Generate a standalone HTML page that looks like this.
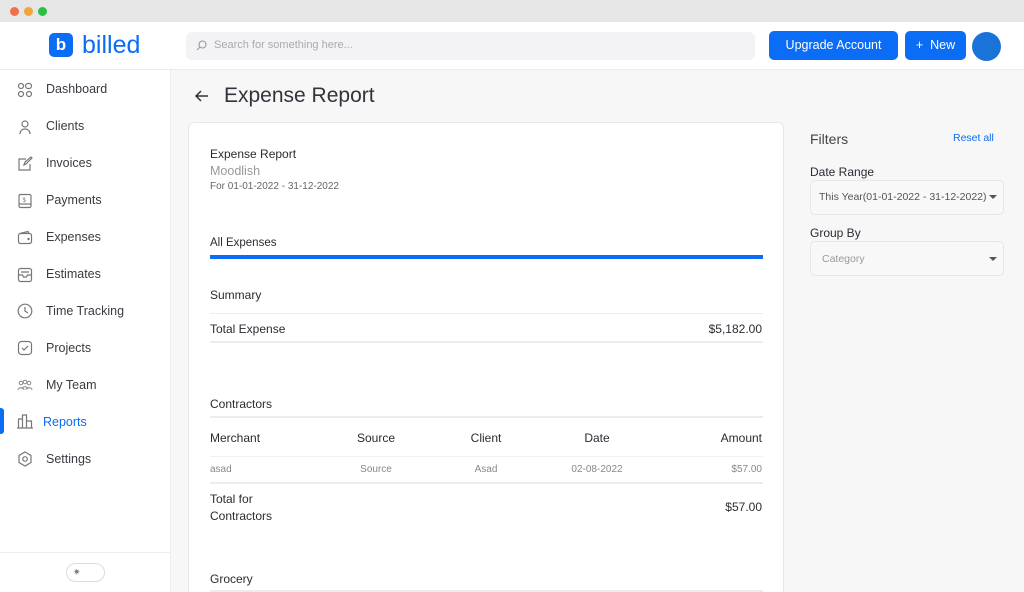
<!DOCTYPE html>
<html><head><meta charset="utf-8">
<style>
*{box-sizing:border-box;margin:0;padding:0}
html,body{width:1024px;height:592px;overflow:hidden}
body{font-family:"Liberation Sans",sans-serif;background:#f7f7f8;position:relative;color:#2b2b33}
.a{position:absolute}
.top{left:0;top:0;width:1024px;height:22px;background:#e6e6e6}
.dot{top:7px;width:9px;height:9px;border-radius:50%}
.hdr{left:0;top:22px;width:1024px;height:48px;background:#fff;border-bottom:1px solid #ececec}
.side{left:0;top:70px;width:171px;height:522px;background:#fff;border-right:1px solid #eee}
.nav{left:46px;font-size:12.5px;color:#3a3a42}
.ic{left:17px;width:16px;height:16px}
.card{left:188px;top:122px;width:596px;height:470px;background:#fff;border:1px solid #e8e8ec;border-bottom:none;border-radius:6px 6px 0 0}
.t13{font-size:12px;color:#2b2b33}
.line{left:210px;width:553px;height:2px;background:#ececec}
.btn{background:#0b6cf5;color:#fff;font-size:12.5px;border-radius:5px;text-align:center;line-height:29px;top:31px;height:29px}
.sel{left:810px;width:194px;height:35px;background:#f8f8f9;border:1px solid #e6e6e9;border-radius:5px;font-size:10.5px;color:#555}
.caret{right:6px;top:14px;width:0;height:0;border-left:4px solid transparent;border-right:4px solid transparent;border-top:4px solid #555}
</style></head><body>
<div class="a top"></div>
<div class="a dot" style="left:10px;background:#f26e4f"></div>
<div class="a dot" style="left:24px;background:#f5a23b"></div>
<div class="a dot" style="left:38px;background:#29c141"></div>
<div class="a hdr"></div>
<div class="a" style="left:49px;top:33px;width:24px;height:24px;background:#0b6cf5;border-radius:5px;color:#fff;font-weight:bold;font-size:17px;text-align:center;line-height:23px">b</div>
<div class="a" style="left:82px;top:31px;font-size:25px;color:#0b6cf5">billed</div>
<div class="a" style="left:186px;top:32px;width:569px;height:28px;background:#f3f3f5;border-radius:6px"></div>
<svg class="a" style="left:196px;top:40px" width="11" height="11" viewBox="0 0 11 11"><circle cx="6.5" cy="4.5" r="3.5" fill="none" stroke="#999" stroke-width="1.1"/><path d="M4 7L1 10" stroke="#999" stroke-width="1.1"/></svg>
<div class="a" style="left:214px;top:39px;font-size:11px;color:#aaa">Search for something here...</div>
<div class="a btn" style="left:769px;width:129px">Upgrade Account</div>
<div class="a btn" style="left:905px;width:61px">+&nbsp; New</div>
<div class="a" style="left:972px;top:32px;width:29px;height:29px;border-radius:50%;background:#1a73d9"></div>

<div class="a side"></div>
<svg class="a ic" style="top:82px" viewBox="0 0 16 16" fill="none" stroke="#777" stroke-width="1.2"><circle cx="4" cy="4" r="2.5"/><rect x="8.5" y="1.5" width="6" height="5" rx="2.5"/><circle cx="4" cy="12" r="2.5"/><circle cx="12" cy="12" r="2.5"/></svg>
<div class="a nav" style="top:82px">Dashboard</div>
<svg class="a ic" style="top:119px" viewBox="0 0 16 16" fill="none" stroke="#777" stroke-width="1.2"><circle cx="8" cy="5" r="3"/><path d="M3 15c0-3 2-5 5-5s5 2 5 5"/></svg>
<div class="a nav" style="top:119px">Clients</div>
<svg class="a ic" style="top:156px" viewBox="0 0 16 16" fill="none" stroke="#777" stroke-width="1.2"><path d="M9 3H2v11h11V8"/><path d="M7 9l1-3 6-5 1 1-6 6z"/></svg>
<div class="a nav" style="top:156px">Invoices</div>
<svg class="a ic" style="top:193px" viewBox="0 0 16 16" fill="none" stroke="#777" stroke-width="1.2"><rect x="2" y="1.5" width="12" height="13" rx="1.5"/><path d="M2 11h12"/><text x="5.5" y="9" font-size="6" fill="#777" stroke="none">$</text></svg>
<div class="a nav" style="top:193px">Payments</div>
<svg class="a ic" style="top:230px" viewBox="0 0 16 16" fill="none" stroke="#777" stroke-width="1.2"><rect x="1.5" y="3.5" width="13" height="10" rx="2"/><path d="M3 3.5L11 1.5l1 2"/><circle cx="11.5" cy="9" r=".6" fill="#777"/></svg>
<div class="a nav" style="top:230px">Expenses</div>
<svg class="a ic" style="top:267px" viewBox="0 0 16 16" fill="none" stroke="#777" stroke-width="1.2"><rect x="1.5" y="1.5" width="13" height="13" rx="2"/><path d="M1.5 8h4l1 2h3l1-2h4M4 5h8"/></svg>
<div class="a nav" style="top:267px">Estimates</div>
<svg class="a ic" style="top:303px" viewBox="0 0 16 16" fill="none" stroke="#777" stroke-width="1.2"><circle cx="8" cy="8" r="6.8"/><path d="M8 4v4l3 2"/></svg>
<div class="a nav" style="top:304px">Time Tracking</div>
<svg class="a ic" style="top:340px" viewBox="0 0 16 16" fill="none" stroke="#777" stroke-width="1.2"><rect x="1.5" y="1.5" width="13" height="13" rx="3"/><path d="M5 8l2 2 4-4"/></svg>
<div class="a nav" style="top:341px">Projects</div>
<svg class="a ic" style="top:377px" viewBox="0 0 16 16" fill="none" stroke="#888" stroke-width="1"><circle cx="4" cy="6" r="1.8"/><circle cx="8" cy="5" r="1.8"/><circle cx="12" cy="6" r="1.8"/><path d="M1 13c0-3 6-3 6 0M5 12c0-3 6-3 6 0M9 13c0-3 6-3 6 0"/></svg>
<div class="a nav" style="top:378px">My Team</div>
<div class="a" style="left:0;top:408px;width:4px;height:26px;background:#0b6cf5;border-radius:0 3px 3px 0"></div>
<svg class="a ic" style="top:413px" viewBox="0 0 16 16" fill="none" stroke="#777" stroke-width="1.2"><path d="M1.5 15V6h4v9M5.5 15V2h4v13M9.5 15V8h5v7M0 15h16"/></svg>
<div class="a nav" style="top:415px;left:43px;color:#0b6cf5">Reports</div>
<svg class="a ic" style="top:451px" viewBox="0 0 16 16" fill="none" stroke="#777" stroke-width="1.2"><path d="M8 1l6 3.5v7L8 15l-6-3.5v-7z"/><circle cx="8" cy="8" r="2.3"/></svg>
<div class="a nav" style="top:452px">Settings</div>
<div class="a" style="left:0;top:552px;width:171px;height:1px;background:#eee"></div>
<div class="a" style="left:66px;top:563px;width:39px;height:19px;border:1px solid #ddd;border-radius:10px;background:#fff;font-size:9px;color:#777;padding-left:6px;line-height:17px">✷</div>

<svg class="a" style="left:194px;top:89px" width="15" height="14" viewBox="0 0 15 14" fill="none" stroke="#333" stroke-width="1.5"><path d="M14 7H2M7 2L2 7l5 5"/></svg>
<div class="a" style="left:224px;top:84px;font-size:21px;color:#33333b">Expense Report</div>

<div class="a card"></div>
<div class="a t13" style="left:210px;top:147px">Expense Report</div>
<div class="a" style="left:210px;top:164px;font-size:12.5px;color:#999">Moodlish</div>
<div class="a" style="left:210px;top:181px;font-size:10px;color:#666">For 01-01-2022 - 31-12-2022</div>
<div class="a t13" style="left:210px;top:237px;font-size:11.5px">All Expenses</div>
<div class="a" style="left:210px;top:255px;width:553px;height:4px;background:#0b6cf5"></div>
<div class="a t13" style="left:210px;top:288px">Summary</div>
<div class="a line" style="top:313px;height:1px"></div>
<div class="a t13" style="left:210px;top:322px">Total Expense</div>
<div class="a t13" style="right:262px;top:322px">$5,182.00</div>
<div class="a line" style="top:341px"></div>
<div class="a t13" style="left:210px;top:397px">Contractors</div>
<div class="a line" style="top:416px"></div>
<div class="a t13" style="left:210px;top:431px">Merchant</div>
<div class="a t13" style="left:336px;width:80px;text-align:center;top:431px">Source</div>
<div class="a t13" style="left:446px;width:80px;text-align:center;top:431px">Client</div>
<div class="a t13" style="left:557px;width:80px;text-align:center;top:431px">Date</div>
<div class="a t13" style="right:262px;top:431px">Amount</div>
<div class="a line" style="top:456px;height:1px;background:#f1f1f1"></div>
<div class="a" style="left:210px;top:464px;font-size:10px;color:#888">asad</div>
<div class="a" style="left:336px;width:80px;text-align:center;top:464px;font-size:10px;color:#888">Source</div>
<div class="a" style="left:446px;width:80px;text-align:center;top:464px;font-size:10px;color:#888">Asad</div>
<div class="a" style="left:557px;width:80px;text-align:center;top:464px;font-size:10px;color:#888">02-08-2022</div>
<div class="a" style="right:262px;top:464px;font-size:10px;color:#888">$57.00</div>
<div class="a line" style="top:482px"></div>
<div class="a t13" style="left:210px;top:491px;line-height:17px">Total for<br>Contractors</div>
<div class="a t13" style="right:262px;top:500px">$57.00</div>
<div class="a t13" style="left:210px;top:572px">Grocery</div>
<div class="a line" style="top:590px"></div>

<div class="a" style="left:810px;top:131px;font-size:14px;color:#444">Filters</div>
<div class="a" style="left:953px;top:132px;font-size:10.5px;color:#0b6cf5">Reset all</div>
<div class="a t13" style="left:810px;top:165px">Date Range</div>
<div class="a sel" style="top:180px;padding:10px 8px">This Year(01-01-2022 - 31-12-2022)<div class="a caret"></div></div>
<div class="a t13" style="left:810px;top:226px">Group By</div>
<div class="a sel" style="top:241px;padding:11px 11px;color:#999">Category<div class="a caret" style="top:15px"></div></div>
</body></html>
